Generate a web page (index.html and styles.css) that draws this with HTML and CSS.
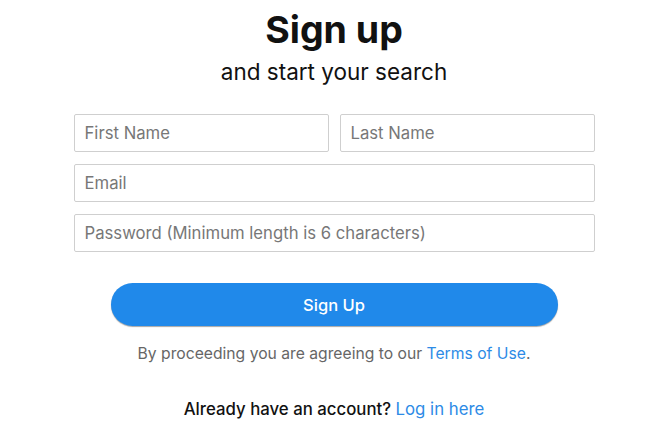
FILE: index.html
```html
<!DOCTYPE html>
<html lang="en">
<head>
  <meta charset="utf-8">
  <meta name="viewport" content="width=device-width, initial-scale=1">
  <title>Sign up</title>
  <link rel="stylesheet" href="styles.css">
</head>
<body>
  <div class="signup">
    <h1>Sign up</h1>
    <p class="subtitle">and start your search</p>

    <form class="signup-form" onsubmit="return false">
      <div class="row">
        <input type="text" placeholder="First Name">
        <input type="text" placeholder="Last Name">
      </div>
      <input type="email" placeholder="Email">
      <input type="password" placeholder="Password (Minimum length is 6 characters)">
      <button class="btn" type="submit">Sign Up</button>
    </form>

    <p class="terms">By proceeding you are agreeing to our <a href="#">Terms of Use</a>.</p>
    <p class="login">Already have an account? <a href="#">Log in here</a></p>
  </div>
</body>
</html>
```

FILE: styles.css
```css
:root {
  --color-primary: #2089ea;
  --color-link: #2d8be6;
  --color-text: #111;
  --color-muted: #666;
  --border: #cfcfcf;
  --font-body: Inter, 'Liberation Sans', Arial, sans-serif;
}
*, *::before, *::after { box-sizing: border-box; }
body { margin: 0; font-family: var(--font-body); color: var(--color-text); background: #fff; }
.signup { width: 521px; margin: 0 auto; padding-top: 8px; text-align: center; transform: translateX(-1px); }
h1 { margin: 0; font-size: 37.5px; font-weight: 700; line-height: 44px; }
.subtitle { margin: 6px 0 0; font-size: 22.5px; line-height: 28px; }
.signup-form { display: flex; flex-direction: column; gap: 12px; margin-top: 28px; }
.row { display: flex; gap: 11px; }
.row input { flex: 1; min-width: 0; }
input { width: 100%; height: 38px; padding: 0 10px; border: 1px solid var(--border); border-radius: 2px; font-family: var(--font-body); font-size: 16.7px; color: var(--color-text); }
input::placeholder { color: #777; }
.btn { align-self: center; width: 447px; height: 43px; margin-top: 19px; border: none; border-radius: 22px; background: var(--color-primary); color: #fff; font-family: var(--font-body); font-size: 16.5px; font-weight: 500; box-shadow: 0 1px 1px rgba(0,0,0,0.35); cursor: pointer; }
.terms { margin: 18px 0 0; font-size: 15.7px; line-height: 20px; color: var(--color-muted); }
.login { margin: 34px 0 0; font-size: 16.8px; line-height: 22px; color: var(--color-text); font-weight: 500; }
a { color: var(--color-link); text-decoration: none; font-weight: 400; }
```
